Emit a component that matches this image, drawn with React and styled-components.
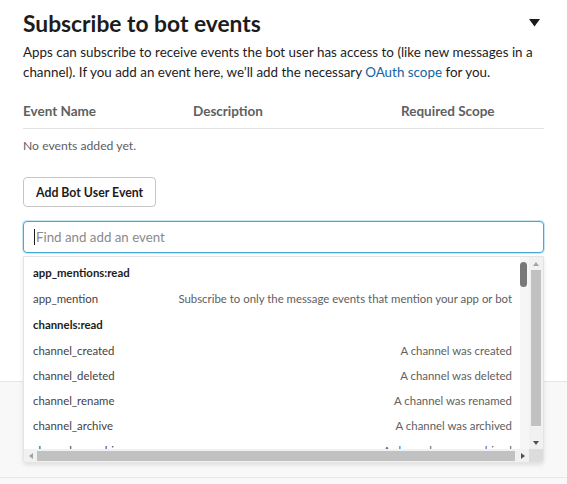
import React from 'react';
import styled, {createGlobalStyle} from "styled-components";

const GlobalStyle = createGlobalStyle`
  html, body {
    margin: 0;
    padding: 0;
    background: #f8f8f8;
  }
  body {
    font-family: Lato, "Noto Sans", "Liberation Sans", sans-serif;
    color: #1d1c1d;
  }
`;

const events = [
    {scope: 'app_mentions:read'},
    {name: 'app_mention', desc: 'Subscribe to only the message events that mention your app or bot'},
    {scope: 'channels:read'},
    {name: 'channel_created', desc: 'A channel was created'},
    {name: 'channel_deleted', desc: 'A channel was deleted'},
    {name: 'channel_rename', desc: 'A channel was renamed'},
    {name: 'channel_archive', desc: 'A channel was archived'},
    {name: 'channel_unarchive', desc: 'A channel was unarchived'},
];

const Caret = () => (
    <svg width="11" height="8" viewBox="0 0 11 8">
        <path d="M0 0 H11 L5.5 7.5 Z" fill="#1d1c1d"/>
    </svg>
);

const Arrow = ({dir, dim}) => {
    const paths = {
        up: 'M0 4 L3 0 L6 4 Z',
        down: 'M0 0 H6 L3 4 Z',
        left: 'M4 0 V6 L0 3 Z',
        right: 'M0 0 L4 3 L0 6 Z',
    };
    const vertical = dir === 'up' || dir === 'down';
    return (
        <svg width={vertical ? 6 : 4} height={vertical ? 4 : 6} viewBox={vertical ? '0 0 6 4' : '0 0 4 6'}>
            <path d={paths[dir]} fill={dim ? '#a3a3a3' : '#505050'}/>
        </svg>
    );
};

const App = () => {
    return (
        <>
            <GlobalStyle/>
            <Section>
                <TitleRow>
                    <Title>Subscribe to bot events</Title>
                    <Caret/>
                </TitleRow>
                <Intro>
                    Apps can subscribe to receive events the bot user has access to (like new messages in a
                    channel). If you add an event here, we’ll add the necessary <Link>OAuth scope</Link> for you.
                </Intro>
                <TableHead>
                    <span>Event Name</span>
                    <span>Description</span>
                    <span>Required Scope</span>
                </TableHead>
                <Empty>No events added yet.</Empty>
                <AddButton>Add Bot User Event</AddButton>
                <SearchWrap>
                    <SearchInput placeholder="Find and add an event"/>
                    <Dropdown>
                        <Viewport>
                            <List>
                                {events.map((ev, i) => ev.scope
                                    ? <ScopeRow key={i}>{ev.scope}</ScopeRow>
                                    : (
                                        <EventRow key={i}>
                                            <EventName>{ev.name}</EventName>
                                            <EventDesc>{ev.desc}</EventDesc>
                                        </EventRow>
                                    ))}
                            </List>
                            <Track>
                                <Thumb/>
                            </Track>
                        </Viewport>
                        <VScroll>
                            <ArrowBox><Arrow dir="up" dim/></ArrowBox>
                            <VThumb/>
                            <ArrowBox><Arrow dir="down"/></ArrowBox>
                        </VScroll>
                        <HScroll>
                            <ArrowBox><Arrow dir="left" dim/></ArrowBox>
                            <HThumb/>
                            <ArrowBox><Arrow dir="right"/></ArrowBox>
                        </HScroll>
                        <Corner/>
                    </Dropdown>
                </SearchWrap>
            </Section>
            <Footer/>
        </>
    )
};

const Section = styled.section`
  box-sizing: border-box;
  height: 382px;
  padding: 9px 23px 0;
  background: #fff;
  border-bottom: 1px solid #e6e6e6;
  display: flex;
  flex-direction: column;
`;

const TitleRow = styled.div`
  display: flex;
  justify-content: space-between;
  align-items: center;
  padding-right: 4px;
`;

const Title = styled.h2`
  margin: 0;
  font-size: 22.8px;
  line-height: 28px;
  font-weight: 700;
  color: #1d1c1d;
`;

const Intro = styled.p`
  margin: 5px 0 0;
  font-size: 13.4px;
  line-height: 20px;
  color: #1d1c1d;
`;

const Link = styled.a`
  color: #1264a3;
`;

const TableHead = styled.div`
  display: grid;
  grid-template-columns: 170px 208px 1fr;
  margin-top: 11px;
  padding: 8px 0 7px;
  line-height: 20px;
  font-size: 13.5px;
  font-weight: 700;
  color: #616061;
  border-bottom: 1px solid #e2e2e2;
`;

const Empty = styled.div`
  margin-top: 8px;
  font-size: 12.2px;
  line-height: 18px;
  color: #616061;
`;

const AddButton = styled.button`
  align-self: flex-start;
  margin-top: 22px;
  height: 30px;
  padding: 0 12px;
  font-family: inherit;
  font-size: 12.3px;
  font-weight: 700;
  color: #1d1c1d;
  background: #fff;
  border: 1px solid #c6c6c6;
  border-radius: 4px;
`;

const SearchWrap = styled.div`
  position: relative;
  margin-top: 14px;

  &::before {
    content: '';
    position: absolute;
    left: 11px;
    top: 8px;
    width: 1px;
    height: 16px;
    background: #1d1c1d;
  }
`;

const SearchInput = styled.input`
  box-sizing: border-box;
  width: 100%;
  height: 32px;
  padding: 0 10px 0 12px;
  font-family: inherit;
  font-size: 13.3px;
  color: #1d1c1d;
  border: 1px solid #4aa7dc;
  border-radius: 4px;
  box-shadow: 0 0 0 1px rgba(29, 155, 209, 0.25);
  outline: none;

  &::placeholder {
    color: #8b8a8b;
  }
`;

const Dropdown = styled.div`
  position: absolute;
  top: 35px;
  left: 0;
  right: 0;
  height: 207px;
  box-sizing: border-box;
  border: 1px solid #e4e4e4;
  border-radius: 0 0 4px 4px;
  box-shadow: 0 2px 4px rgba(0, 0, 0, 0.1);
  background: #fff;
  display: grid;
  grid-template-columns: 1fr 14px;
  grid-template-rows: 1fr 13px;
  overflow: hidden;
`;

const Viewport = styled.div`
  position: relative;
  display: flex;
  overflow: hidden;
`;

const List = styled.div`
  flex: 1;
  padding: 2px 8px 0 9px;
`;

const ScopeRow = styled.div`
  height: 27px;
  line-height: 27px;
  font-size: 11.4px;
  font-weight: 700;
  color: #1d1c1d;
`;

const EventRow = styled.div`
  height: 25px;
  display: flex;
  justify-content: space-between;
  align-items: center;
  font-size: 11.4px;
  white-space: nowrap;
`;

const EventName = styled.span`
  color: #454245;
`;

const EventDesc = styled.span`
  color: #616061;
`;

const Track = styled.div`
  width: 9px;
  background: #f6f6f6;
`;

const Thumb = styled.div`
  position: absolute;
  top: 5px;
  right: 2px;
  width: 7px;
  height: 25px;
  border-radius: 4px;
  background: #787878;
`;

const VScroll = styled.div`
  background: #f1f1f1;
  display: flex;
  flex-direction: column;
  align-items: center;
`;

const ArrowBox = styled.div`
  flex: 0 0 13px;
  width: 13px;
  height: 13px;
  display: flex;
  align-items: center;
  justify-content: center;
`;

const VThumb = styled.div`
  flex: 1;
  width: 10px;
  background: #c1c1c1;
  margin-bottom: 10px;
`;

const HScroll = styled.div`
  background: #f1f1f1;
  display: flex;
  align-items: center;
`;

const HThumb = styled.div`
  flex: 1;
  height: 10px;
  background: #c1c1c1;
  margin-right: 1px;
`;

const Corner = styled.div`
  background: #dcdcdc;
`;

const Footer = styled.div`
  height: 95px;
  background: #f8f8f8;
  border-bottom: 1px solid #e8e8e8;
`;

export default App;
